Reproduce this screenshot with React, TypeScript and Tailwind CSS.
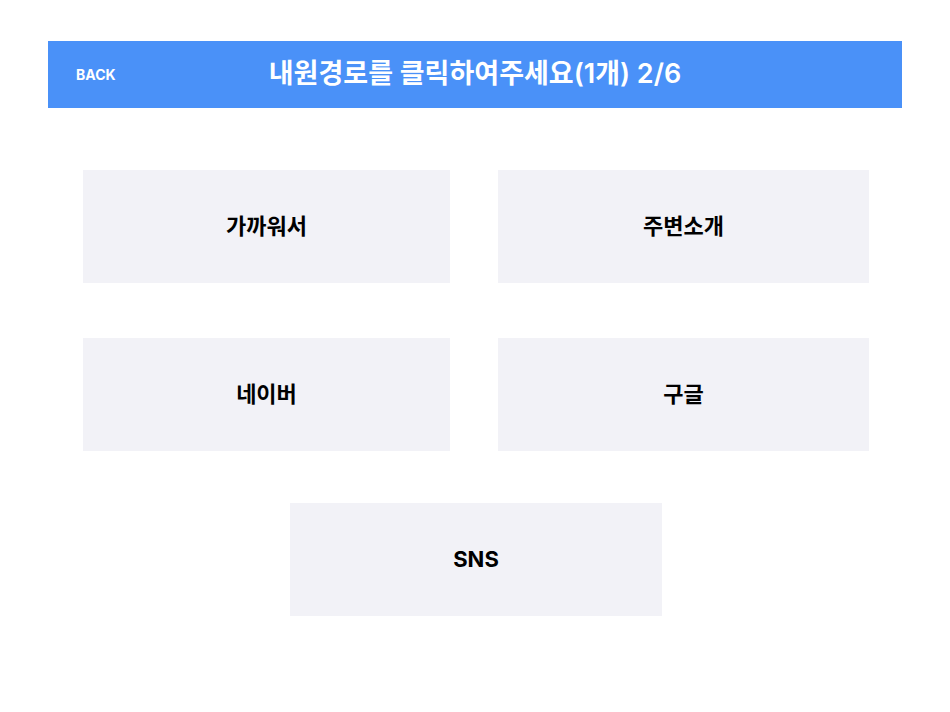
import React from 'react';

const FONT = 'font-["Inter","Noto_Sans_CJK_KR",sans-serif]';

function Choice({ label, width }: { label: string; width: string }) {
  return (
    <button
      className={`${width} h-[113px] bg-[#f2f2f7] flex items-center justify-center text-[22px] font-bold text-black ${FONT}`}
    >
      {label}
    </button>
  );
}

export default function App() {
  return (
    <div className={`w-[950px] h-[712px] bg-white pt-[41px] px-[48px] ${FONT}`}>
      {/* Header */}
      <div className="relative h-[67px] bg-[#4a91f8] flex items-center justify-center">
        <span className="absolute left-[28px] text-[14px] font-bold text-white">BACK</span>
        <span className="text-[27px] font-semibold text-white">
          내원경로를 클릭하여주세요(1개) 2/6
        </span>
      </div>

      {/* Choices */}
      <div className="flex flex-col pt-[62px]">
        <div className="flex gap-[48px] pl-[35px]">
          <Choice label="가까워서" width="w-[367px]" />
          <Choice label="주변소개" width="w-[371px]" />
        </div>
        <div className="flex gap-[48px] pl-[35px] mt-[55px]">
          <Choice label="네이버" width="w-[367px]" />
          <Choice label="구글" width="w-[371px]" />
        </div>
        <div className="flex justify-center mt-[52px] pl-[2px]">
          <Choice label="SNS" width="w-[372px]" />
        </div>
      </div>
    </div>
  );
}
